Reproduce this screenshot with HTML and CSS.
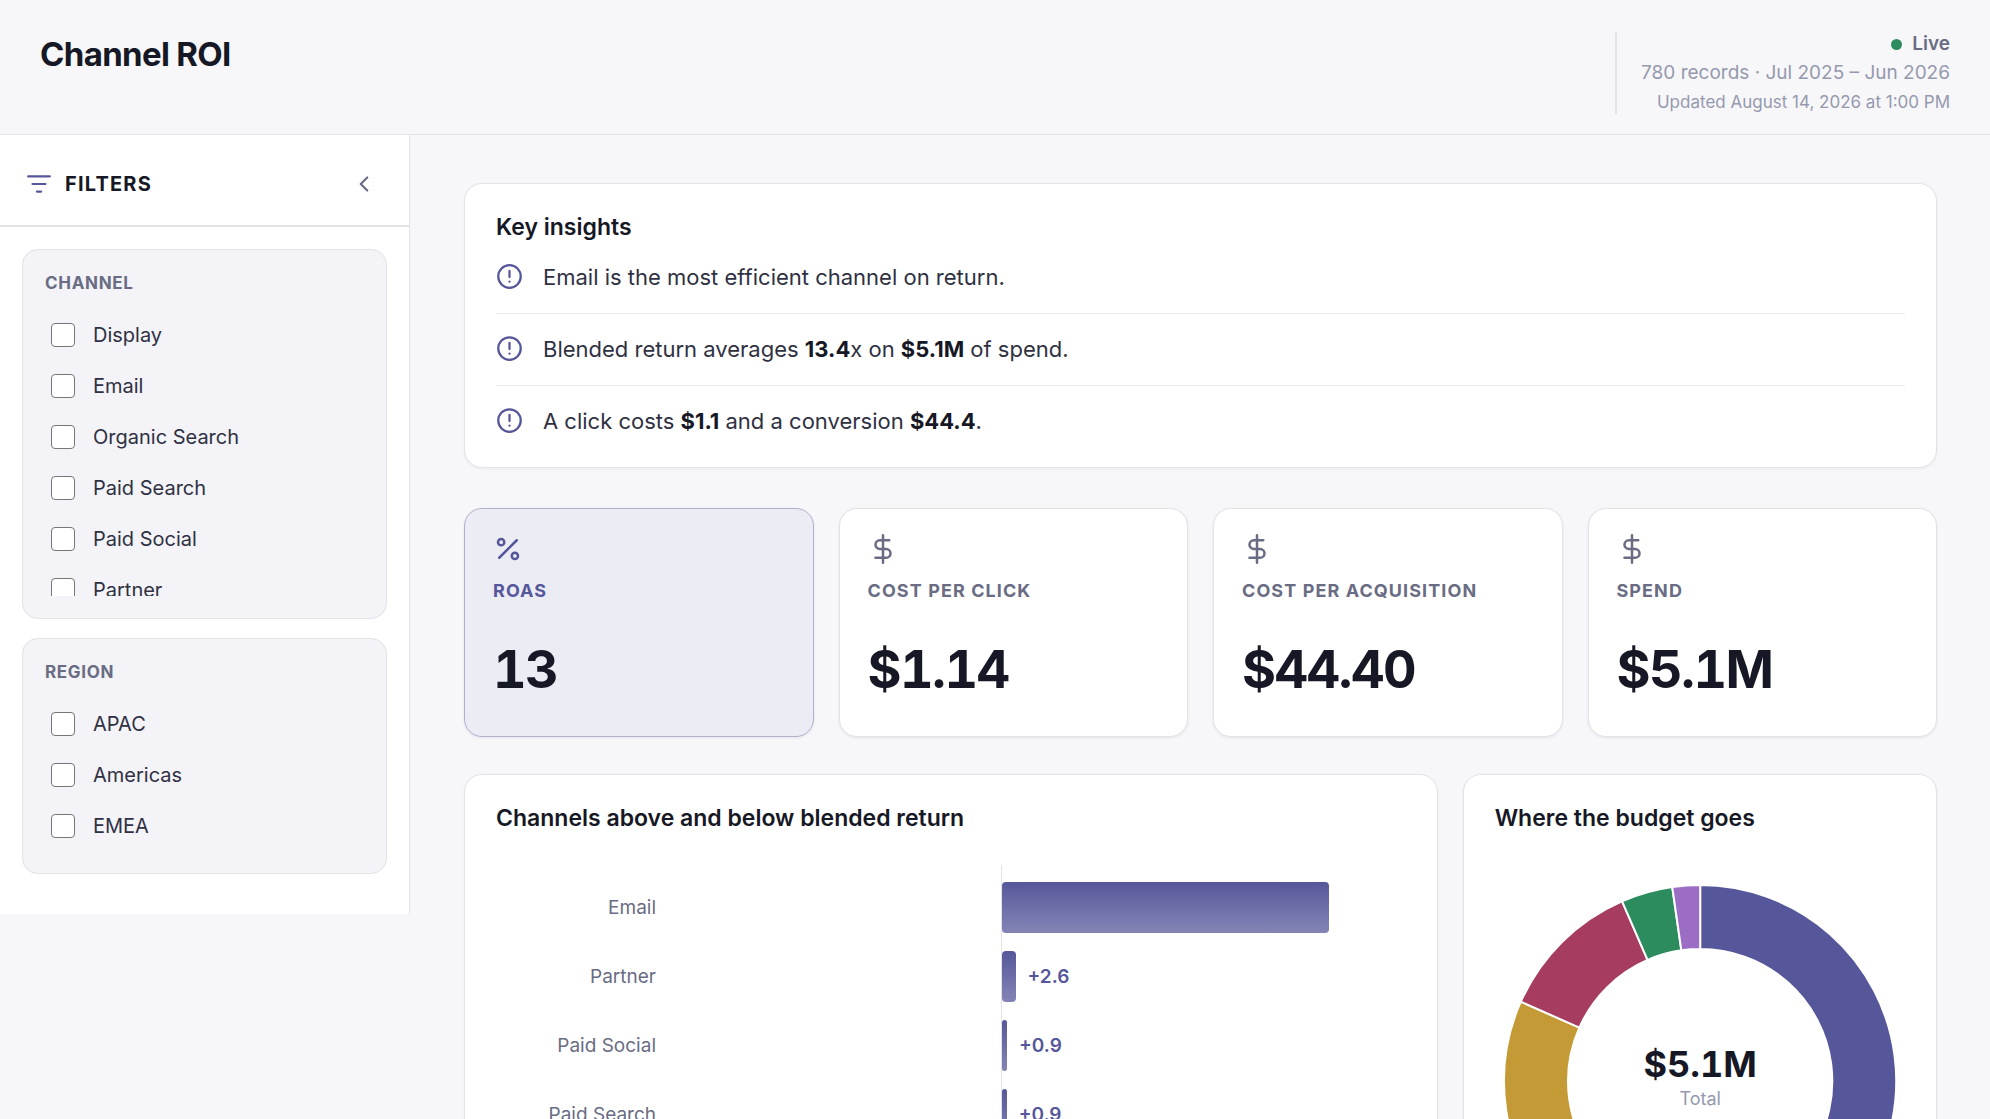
FILE: index.html
```html
<!DOCTYPE html>
<html lang="en">
<head>
  <meta charset="UTF-8" />
  <meta name="viewport" content="width=device-width, initial-scale=1" />
  <title>Channel ROI</title>
  <link rel="stylesheet" href="styles.css">
</head>
<body>

<header class="topbar">
  <h1>Channel ROI</h1>
  <div class="status">
    <div class="status-live"><span class="dot"></span>Live</div>
    <div class="status-range">780 records · Jul 2025 – Jun 2026</div>
    <div class="status-updated">Updated August 14, 2026 at 1:00 PM</div>
  </div>
</header>

<div class="layout">
  <aside class="sidebar">
    <div class="sidebar-head">
      <svg class="filter-icon" viewBox="0 0 24 24"><path d="M2 5h20M6 12h12M10 19h4"/></svg>
      <h2>Filters</h2>
      <button type="button" class="collapse" aria-label="Collapse filters">
        <svg viewBox="0 0 24 24"><path d="M15 18l-6-6 6-6"/></svg>
      </button>
    </div>

    <div class="filters">
      <fieldset class="filter-card">
        <legend>Channel</legend>
        <div class="options">
          <label><input type="checkbox" name="channel" value="display">Display</label>
          <label><input type="checkbox" name="channel" value="email">Email</label>
          <label><input type="checkbox" name="channel" value="organic">Organic Search</label>
          <label><input type="checkbox" name="channel" value="paid-search">Paid Search</label>
          <label><input type="checkbox" name="channel" value="paid-social">Paid Social</label>
          <label><input type="checkbox" name="channel" value="partner">Partner</label>
        </div>
      </fieldset>

      <fieldset class="filter-card">
        <legend>Region</legend>
        <div class="options">
          <label><input type="checkbox" name="region" value="apac">APAC</label>
          <label><input type="checkbox" name="region" value="americas">Americas</label>
          <label><input type="checkbox" name="region" value="emea">EMEA</label>
        </div>
      </fieldset>
    </div>
  </aside>

  <main class="content">
    <section class="card insights">
      <h2>Key insights</h2>
      <ul>
        <li>
          <svg viewBox="0 0 24 24"><circle cx="12" cy="12" r="10"/><path d="M12 7v5.5M12 16.5v.1"/></svg>
          <p>Email is the most efficient channel on return.</p>
        </li>
        <li>
          <svg viewBox="0 0 24 24"><circle cx="12" cy="12" r="10"/><path d="M12 7v5.5M12 16.5v.1"/></svg>
          <p>Blended return averages <strong>13.4</strong>x on <strong>$5.1M</strong> of spend.</p>
        </li>
        <li>
          <svg viewBox="0 0 24 24"><circle cx="12" cy="12" r="10"/><path d="M12 7v5.5M12 16.5v.1"/></svg>
          <p>A click costs <strong>$1.1</strong> and a conversion <strong>$44.4</strong>.</p>
        </li>
      </ul>
    </section>

    <section class="kpis">
      <article class="kpi active">
        <svg viewBox="0 0 24 24"><path d="M19 5L5 19"/><circle cx="6.5" cy="6.5" r="2.5"/><circle cx="17.5" cy="17.5" r="2.5"/></svg>
        <h3>ROAS</h3>
        <p>13</p>
      </article>
      <article class="kpi">
        <svg viewBox="0 0 24 24"><path d="M12 1v22M17 5H9.5a3.5 3.5 0 0 0 0 7h5a3.5 3.5 0 0 1 0 7H6"/></svg>
        <h3>Cost per click</h3>
        <p>$1.14</p>
      </article>
      <article class="kpi">
        <svg viewBox="0 0 24 24"><path d="M12 1v22M17 5H9.5a3.5 3.5 0 0 0 0 7h5a3.5 3.5 0 0 1 0 7H6"/></svg>
        <h3>Cost per acquisition</h3>
        <p>$44.40</p>
      </article>
      <article class="kpi">
        <svg viewBox="0 0 24 24"><path d="M12 1v22M17 5H9.5a3.5 3.5 0 0 0 0 7h5a3.5 3.5 0 0 1 0 7H6"/></svg>
        <h3>Spend</h3>
        <p>$5.1M</p>
      </article>
    </section>

    <section class="charts">
      <article class="card chart-wide">
        <h2>Channels above and below blended return</h2>
        <div class="bars">
          <div class="bar-row">
            <span class="bar-label">Email</span>
            <div class="bar-track"><span class="bar" style="width: 81%"></span></div>
          </div>
          <div class="bar-row">
            <span class="bar-label">Partner</span>
            <div class="bar-track"><span class="bar" style="width: 3.4%"></span><span class="bar-value">+2.6</span></div>
          </div>
          <div class="bar-row">
            <span class="bar-label">Paid Social</span>
            <div class="bar-track"><span class="bar" style="width: 1.3%"></span><span class="bar-value">+0.9</span></div>
          </div>
          <div class="bar-row">
            <span class="bar-label">Paid Search</span>
            <div class="bar-track"><span class="bar" style="width: 1.2%"></span><span class="bar-value">+0.9</span></div>
          </div>
        </div>
      </article>

      <article class="card chart-narrow">
        <h2>Where the budget goes</h2>
        <svg class="donut" viewBox="-1 -1 410 410">
          <path fill="#56579a" d="M204 8A196 196 0 0 1 254.7 393.3L238.2 331.5A132 132 0 0 0 204 72Z"/>
          <path fill="#c49a36" d="M254.7 393.3A196 196 0 0 1 24.8 124.6L83.3 150.5A132 132 0 0 0 238.2 331.5Z"/>
          <path fill="#a63d60" d="M24.8 124.6A196 196 0 0 1 125.9 24.2L151.4 82.9A132 132 0 0 0 83.3 150.5Z"/>
          <path fill="#2d8c5e" d="M125.9 24.2A196 196 0 0 1 176.1 10L185.2 73.3A132 132 0 0 0 151.4 82.9Z"/>
          <path fill="#9b6dc4" d="M176.1 10A196 196 0 0 1 204 8L204 72A132 132 0 0 0 185.2 73.3Z"/>
          <text class="donut-value" x="204" y="200">$5.1M</text>
          <text class="donut-label" x="204" y="228">Total</text>
        </svg>
      </article>
    </section>
  </main>
</div>

</body>
</html>
```
FILE: styles.css
```css
:root {
  --bg: #f7f7fa;
  --border: #e2e2e7;
  --ink: #161825;
  --text: #2f3142;
  --muted: #696c83;
  --faint: #9599ad;
  --accent: #56579a;
}

* {
  box-sizing: border-box;
  margin: 0;
  padding: 0;
}

body {
  display: flex;
  flex-direction: column;
  height: 100vh;
  overflow: hidden;
  background: var(--bg);
  color: var(--ink);
  font-family: Inter, sans-serif;
}

svg {
  fill: none;
  stroke: currentColor;
  stroke-width: 2;
  stroke-linecap: round;
  stroke-linejoin: round;
  flex-shrink: 0;
}

/* Header */
.topbar {
  display: flex;
  justify-content: space-between;
  align-items: flex-start;
  padding: 32px 40px 20px;
  border-bottom: 1px solid var(--border);
}

.topbar h1 {
  font-size: 33px;
  line-height: 44px;
  font-weight: 700;
  letter-spacing: -0.02em;
}

.status {
  display: flex;
  flex-direction: column;
  gap: 5px;
  padding-left: 24px;
  border-left: 2px solid var(--border);
  text-align: right;
  line-height: 24px;
  color: var(--faint);
}

.status-live {
  display: flex;
  justify-content: flex-end;
  align-items: center;
  gap: 10px;
  font-size: 19px;
  font-weight: 600;
  color: var(--muted);
}

.dot {
  width: 11px;
  height: 11px;
  border-radius: 50%;
  background: #2d8c5e;
}

.status-range {
  font-size: 19px;
}

.status-updated {
  font-size: 17px;
}

/* Sidebar */
.layout {
  display: flex;
  flex: 1;
  min-height: 0;
}

.sidebar {
  align-self: flex-start;
  width: 410px;
  flex-shrink: 0;
  padding-bottom: 40px;
  background: #fff;
  border-right: 1px solid var(--border);
}

.sidebar-head {
  display: flex;
  align-items: center;
  padding: 35px 32px 27px 26px;
  border-bottom: 2px solid var(--border);
}

.sidebar-head h2 {
  flex: 1;
  margin-left: 13px;
  font-size: 20px;
  line-height: 28px;
  font-weight: 700;
  letter-spacing: 0.06em;
  text-transform: uppercase;
}

.filter-icon {
  width: 26px;
  height: 26px;
  color: var(--accent);
}

.collapse {
  display: flex;
  border: 0;
  background: none;
  color: var(--muted);
  cursor: pointer;
}

.collapse svg {
  width: 26px;
  height: 26px;
}

.filters {
  display: flex;
  flex-direction: column;
  gap: 19px;
  padding: 22px 22px 0;
}

.filter-card {
  min-width: 0;
  padding: 22px;
  background: #f3f3f8;
  border: 1px solid var(--border);
  border-radius: 16px;
}

.filter-card legend {
  float: left;
  width: 100%;
  margin-bottom: 14px;
  font-size: 17px;
  line-height: 23px;
  font-weight: 700;
  letter-spacing: 0.04em;
  text-transform: uppercase;
  color: var(--muted);
}

.options {
  clear: both;
  max-height: 287px;
  overflow-y: auto;
  scrollbar-width: none;
}

.options label {
  display: flex;
  align-items: center;
  gap: 18px;
  height: 51px;
  padding-left: 6px;
  font-size: 20px;
  color: var(--text);
}

.options input {
  appearance: none;
  width: 24px;
  height: 24px;
  background: #fff;
  border: 1px solid #767676;
  border-radius: 4px;
}

.options input:checked {
  background: var(--accent);
}

/* Content */
.content {
  flex: 1;
  min-width: 0;
  padding: 48px 53px 48px 54px;
  overflow-y: auto;
  scrollbar-width: none;
}

.card {
  padding: 28px 31px;
  background: #fff;
  border: 1px solid var(--border);
  border-radius: 18px;
  box-shadow: 0 1px 3px rgba(22, 24, 37, 0.05);
}

.card h2 {
  font-size: 23px;
  line-height: 30px;
  font-weight: 600;
}

.insights {
  padding-bottom: 28px;
  margin-bottom: 40px;
}

.insights ul {
  list-style: none;
}

.insights li {
  display: flex;
  align-items: center;
  gap: 20px;
  padding: 18px 0;
  border-bottom: 1px solid #ededf1;
}

.insights li:last-child {
  padding-bottom: 0;
  border-bottom: 0;
}

.insights svg {
  width: 27px;
  height: 27px;
  margin-bottom: 3px;
  color: var(--accent);
}

.insights p {
  font-size: 22px;
  line-height: 35px;
  color: var(--text);
}

.insights strong {
  color: var(--ink);
}

.kpis {
  display: grid;
  grid-template-columns: repeat(4, 1fr);
  gap: 25px;
  margin-bottom: 37px;
}

.kpi {
  padding: 25px 28px 31px;
  background: #fff;
  border: 1px solid var(--border);
  border-radius: 18px;
  box-shadow: 0 1px 3px rgba(22, 24, 37, 0.08);
}

.kpi svg {
  display: block;
  width: 30px;
  height: 30px;
  color: var(--muted);
}

.kpi h3 {
  margin-top: 15px;
  font-size: 18px;
  line-height: 24px;
  font-weight: 700;
  letter-spacing: 0.06em;
  text-transform: uppercase;
  color: var(--muted);
}

.kpi p {
  margin-top: 32px;
  font-size: 52px;
  line-height: 70px;
  font-weight: 700;
  letter-spacing: -0.03em;
  font-variant-numeric: tabular-nums;
}

.kpi.active {
  background: #ececf5;
  border-color: #b0b0d0;
}

.kpi.active svg,
.kpi.active h3 {
  color: var(--accent);
}

.charts {
  display: grid;
  grid-template-columns: repeat(12, 1fr);
  gap: 25px;
}

.chart-wide {
  grid-column: span 8;
}

.chart-narrow {
  grid-column: span 4;
}

/* Diverging bars, the track starts at the zero axis */
.bars {
  margin-top: 32px;
}

.bar-row {
  display: grid;
  grid-template-columns: 160px 1fr;
}

.bar-row:first-child > * {
  padding-top: 8px;
}

.bar-label {
  align-self: center;
  text-align: right;
  font-size: 19px;
  color: var(--muted);
}

.bar-track {
  display: flex;
  align-items: center;
  height: 69px;
  margin-left: 46%;
  border-left: 1px solid var(--border);
}

.bar-row:first-child .bar-track {
  height: 77px;
}

.bar {
  height: 51px;
  border-radius: 4px;
  background: linear-gradient(#56579a, #8485b5);
}

.bar-value {
  margin-left: 12px;
  font-size: 19px;
  font-weight: 600;
  color: var(--accent);
}

.donut {
  display: block;
  width: 100%;
  margin-top: 43px;
}

.donut path {
  stroke: #fff;
}

.donut text {
  stroke: none;
  text-anchor: middle;
}

.donut-value {
  font-size: 36px;
  font-weight: 700;
  font-variant-numeric: tabular-nums;
  fill: var(--ink);
}

.donut-label {
  font-size: 18px;
  fill: var(--faint);
}
```
